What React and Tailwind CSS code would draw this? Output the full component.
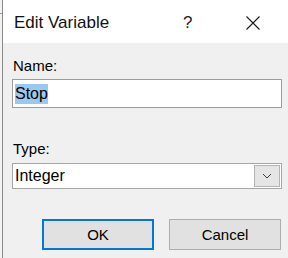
const font = { fontFamily: '"Liberation Sans", Arial, sans-serif' };

function CloseGlyph() {
  return (
    <svg width="16" height="16" viewBox="0 0 16 16" className="block">
      <path d="M1.5 1.5L14.5 14.5M14.5 1.5L1.5 14.5" stroke="#1a1a1a" strokeWidth="1.1" />
    </svg>
  );
}

function Chevron() {
  return (
    <svg width="10" height="6" viewBox="0 0 10 6" className="block">
      <path d="M1 1L5 5L9 1" fill="none" stroke="#3c3c3c" strokeWidth="1" />
    </svg>
  );
}

export default function App() {
  return (
    <div className="w-[288px] h-[258px] flex bg-[#f0f0f0] overflow-hidden" style={font}>
      {/* strip of the window behind */}
      <div className="w-[2px] bg-[#f3f3f3] flex flex-col">
        <div className="h-[13px]" />
        <div className="h-px bg-[#9a9a9a]" />
      </div>
      <div className="flex-1 flex flex-col border-l border-[#8a8a8a]">
        {/* title bar */}
        <div className="h-[43px] bg-white flex items-center pt-[3px] text-[17px] text-[#111]">
          <span className="ml-[11px] w-[169px]">Edit Variable</span>
          <span className="w-[62px] text-[#222]">?</span>
          <span>
            <CloseGlyph />
          </span>
        </div>

        {/* body */}
        <div className="flex-1 flex flex-col pl-[9px] text-[15px] leading-[18px] text-black">
          <div className="mt-[14px] ml-px">Name:</div>
          <div className="mt-[4px] w-[270px] h-[29px] bg-white border border-[#9c9c9c] flex items-center pl-[2px]">
            <span className="bg-[#99c9ef] text-[16px] leading-[20px]">Stop</span>
          </div>

          <div className="mt-[32px] ml-px">Type:</div>
          <div className="mt-[5px] w-[270px] h-[26px] bg-white border border-[#a6a6a6] flex items-center justify-between pl-[2px] pr-px">
            <span className="text-[16px] leading-[20px]">Integer</span>
            <div className="w-[26px] h-[22px] bg-[#e5e5e5] border border-[#b4b4b4] flex items-center justify-center">
              <Chevron />
            </div>
          </div>

          <div className="mt-[30px] flex pl-[30px] gap-[15px]">
            <button className="w-[112px] h-[31px] bg-[#e1e1e1] border-2 border-[#0078d7] text-[15px] text-black">
              OK
            </button>
            <button className="w-[112px] h-[31px] bg-[#e1e1e1] border border-[#adadad] text-[15px] text-black">
              Cancel
            </button>
          </div>
        </div>
      </div>
    </div>
  );
}
